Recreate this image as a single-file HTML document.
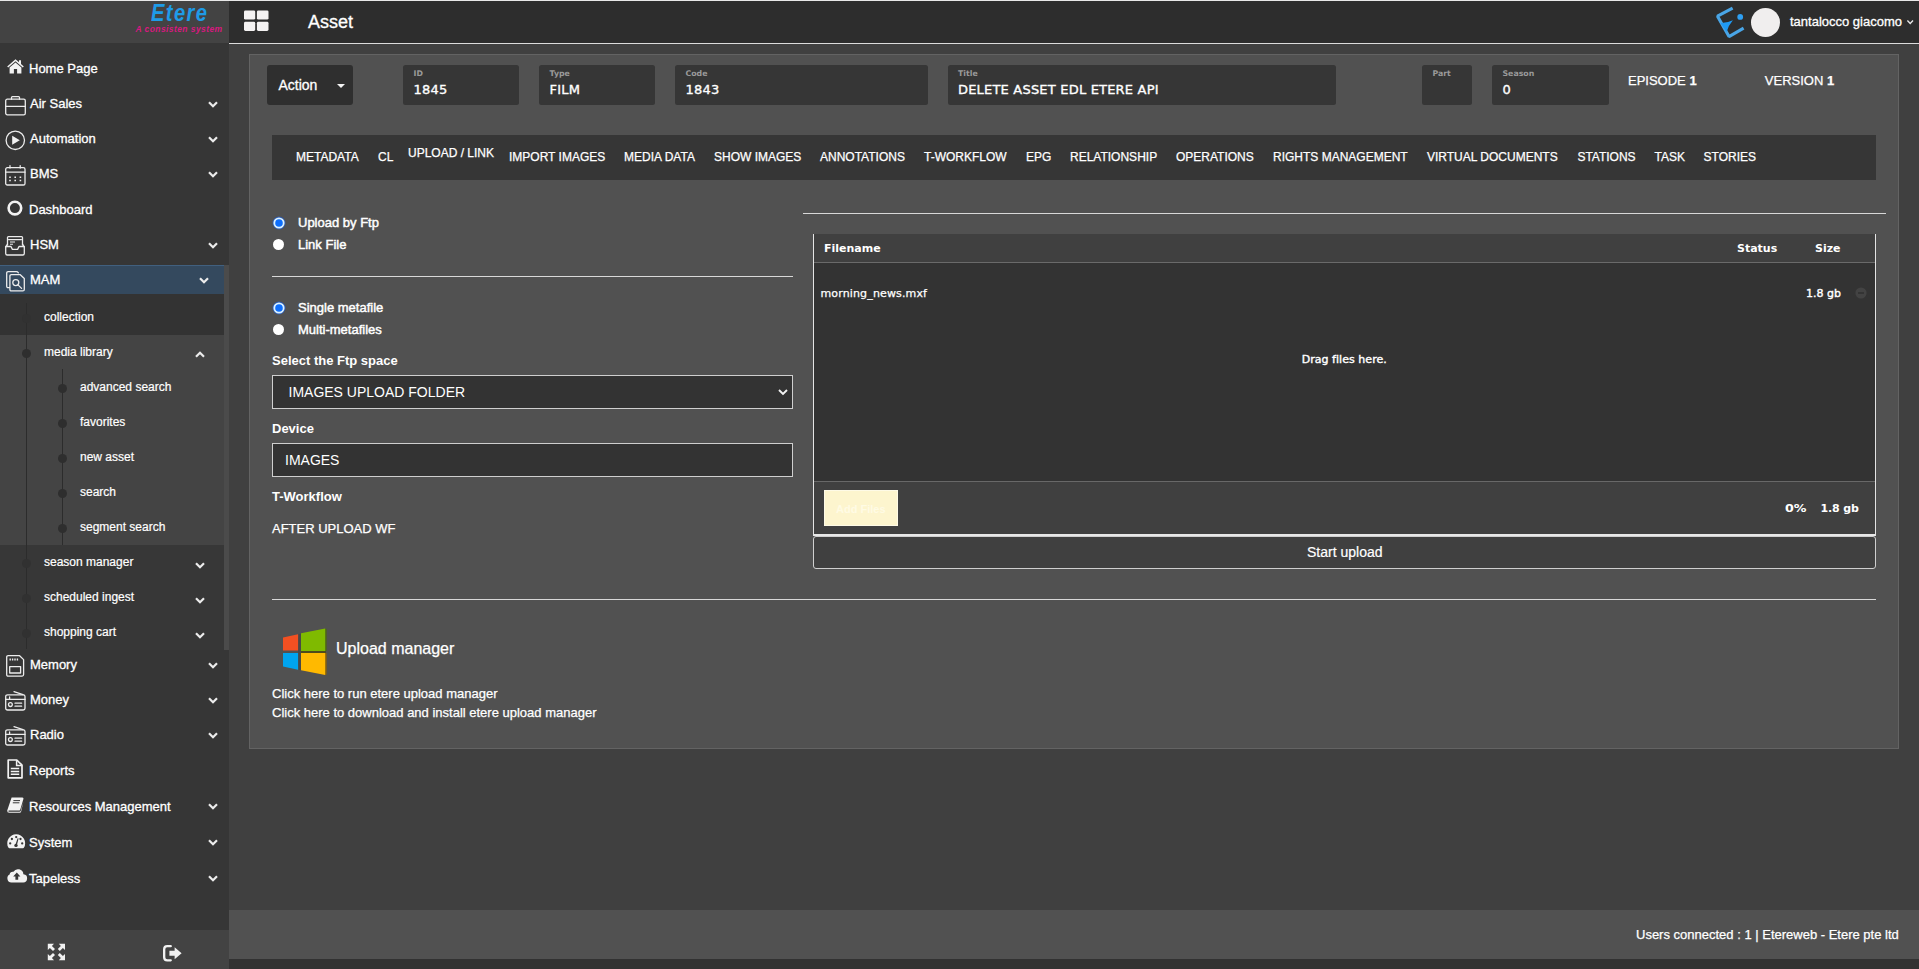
<!DOCTYPE html>
<html lang="en">
<head>
<meta charset="utf-8">
<title>Asset</title>
<style>
*{box-sizing:border-box;margin:0;padding:0}
html,body{width:1919px;height:969px;overflow:hidden;background:#404040}
body{font-family:"Liberation Sans",Arial,sans-serif;font-size:13px;color:#fff;position:relative}
.abs{position:absolute}
svg{display:block;overflow:visible}
#topline{left:0;top:0;width:1919px;height:1px;background:#e8e8e8;z-index:20}
/* sidebar */
#side{left:0;top:0;width:229px;height:969px;background:#363636}
#logo{left:0;top:0;width:229px;height:43px;background:#434343}
#sidebottom{left:0;top:929.6px;width:229px;height:40px;background:#434343}
.mi{position:absolute;left:0;width:229px;height:20px;line-height:20px;font-size:13px;color:#fff;white-space:nowrap;-webkit-text-stroke:0.3px #fff}
.mi span{position:absolute;left:30px;top:0.8px}
.mi.fa span{left:29px}
.ico{position:absolute;left:0;top:0}
.sub{position:absolute;font-size:12px;line-height:16px;height:16px;color:#fff;white-space:nowrap;-webkit-text-stroke:0.2px #fff}
.chev{position:absolute;width:10px;height:7px}
.dot{position:absolute;width:9px;height:9px;border-radius:50%;background:#2e2e2e}
#lg1{left:150.6px;top:0.7px;font-size:23px;line-height:24px;font-weight:bold;font-style:italic;color:#1e9be8;letter-spacing:1.6px;transform-origin:0 0;transform:scaleX(0.875)}
#lg2{left:135.5px;top:23.8px;font-size:8.5px;line-height:11px;font-weight:bold;font-style:italic;color:#d8187f;letter-spacing:0.42px;white-space:nowrap}
/* header */
#header{left:229px;top:0;width:1690px;height:43px;background:#2d2d2d}
#hline{left:229px;top:43px;width:1690px;height:1px;background:#dcdcdc}
#ttl{left:308px;top:11px;font-size:18px;line-height:22px;color:#fff;-webkit-text-stroke:0.3px #fff}
#uname{left:1790px;top:12px;font-size:13px;line-height:20px;white-space:nowrap;-webkit-text-stroke:0.3px #fff}
/* main */
#panel{left:249px;top:54px;width:1650px;height:695px;background:#515151;border:1px solid #636363}
#footer{left:229px;top:910px;width:1690px;height:49px;background:#515151}
#footbot{left:229px;top:959px;width:1690px;height:10px;background:#323232}
#actbtn{left:267px;top:65px;width:86px;height:40px;background:#2f2f2f;border-radius:3px}
#acttxt{position:absolute;left:11.5px;top:10.2px;font-size:14px;line-height:20px;-webkit-text-stroke:0.3px #fff}
#actbtn i{position:absolute;left:70px;top:19px;width:0;height:0;border-left:4px solid transparent;border-right:4px solid transparent;border-top:4.5px solid #f4f4f4}
.fld{top:65px;height:40px;background:#363636;border-radius:2.5px;font-family:"DejaVu Sans",Verdana,sans-serif}
.fl{position:absolute;left:10.5px;top:3.5px;font-size:7.8px;line-height:10px;color:#9a9a9a;white-space:nowrap;transform-origin:0 50%}
.fv{position:absolute;left:10.5px;top:16.5px;font-size:13px;line-height:16px;color:#fff;white-space:nowrap;font-weight:normal;letter-spacing:0.2px;-webkit-text-stroke:0.35px #fff}
.ev{top:71.3px;font-size:13px;line-height:20px;white-space:nowrap;-webkit-text-stroke:0.25px #fff}
#tabs{left:272px;top:135px;width:1604px;height:45px;background:#363636}
.tb{position:absolute;top:14.2px;font-size:12px;line-height:16px;white-space:nowrap;color:#fff;-webkit-text-stroke:0.25px #fff}
.tb.act{top:10px}
.rad{width:11.5px;height:11.5px;border-radius:50%;background:#fff}
.rad.on{border:1.6px solid #d4efff;background:#0d6efd;box-shadow:0 0 0 0.6px rgba(30,80,200,0.55)}
.rl{font-size:13px;line-height:20px;white-space:nowrap;-webkit-text-stroke:0.45px #fff}
.hr{height:1px;background:#d8d8d8}
.lb{font-size:13px;line-height:20px;font-weight:bold;white-space:nowrap}
.inp{width:521px;background:#333;border:1px solid #cfcfcf}
.inp span{position:absolute;font-size:14px;line-height:20px;white-space:nowrap;color:#fff}
.pl{font-size:13px;line-height:20px;white-space:nowrap;-webkit-text-stroke:0.25px #fff}
#upbox{left:813px;top:234px;width:1063px;height:302px;border-left:1px solid #e4e4e4;border-right:1px solid #e4e4e4;border-bottom:2px solid #e8e8e8;font-family:"DejaVu Sans",Verdana,sans-serif;font-size:11px}
#uphead{left:0;top:0;width:1061px;height:29px;background:#404040;border-bottom:1px solid #6a6a6a}
#uphead b,#upfoot b{position:absolute;font-size:11px;line-height:14px;white-space:nowrap;color:#fff}
#uphead b{top:7.7px}
#upbody{left:0;top:29px;width:1061px;height:218px;background:#333}
.vt{font-size:11px;line-height:14px;white-space:nowrap;color:#fff;-webkit-text-stroke:0.25px #fff}
#upfoot{left:0;top:247px;width:1061px;height:53px;background:#404040;border-top:1px solid #686868}
#upfoot b{top:19.7px}
#addbtn{left:10px;top:8px;width:74px;height:36px;background:#fdf5ce;border:1px solid #fefae6}
#addtxt{position:absolute;left:11px;top:9.5px;font-family:"Liberation Sans",Arial,sans-serif;font-size:11px;line-height:16px;font-weight:bold;color:#fffbe4;white-space:nowrap}
#startbtn{left:813px;top:536px;width:1063px;height:33px;background:#404040;border:1px solid #cfcfcf;border-radius:3px}
#starttxt{position:absolute;left:493px;top:6px;font-size:14px;line-height:18px;white-space:nowrap;-webkit-text-stroke:0.2px #fff}
#foottxt{position:absolute;left:1407px;top:15px;font-size:13px;line-height:20px;white-space:nowrap;-webkit-text-stroke:0.25px #fff}
</style>
</head>
<body>
<div id="side" class="abs"></div>
<div id="logo" class="abs"><div class="abs" id="lg1">Etere</div><div class="abs" id="lg2">A consisten system</div></div>
<div class="abs" style="left:224px;top:265px;width:5px;height:385px;background:#4b4b4b"></div>
<div class="abs" style="left:0;top:265px;width:224px;height:29px;background:#34495e;border-top:1px solid #41607f"></div>
<div class="abs" style="left:0;top:294px;width:224px;height:41px;background:#333"></div>
<div class="abs" style="left:0;top:334.7px;width:224px;height:210.5px;background:#444"></div>
<div class="abs" style="left:0;top:545.2px;width:224px;height:104.8px;background:#373737"></div>
<div class="abs" style="left:26px;top:303px;width:1px;height:346px;background:#2c2c2c"></div>
<div class="abs" style="left:62px;top:369px;width:1px;height:176px;background:#2c2c2c"></div>
<div class="mi fa" style="top:58px"><svg class="ico" style="left:7px;top:1.1px" width="17" height="15" viewBox="0 0 17 15"><path d="M8.5 0.3 L0.2 7.4 L1.2 8.5 L8.5 2.3 L15.8 8.5 L16.8 7.4 L14 5 V1.2 H12 V3.3 Z" fill="#f2f2f2"/><path d="M8.5 3.6 L2.6 8.6 V14.5 H6.9 V10 H10.1 V14.5 H14.4 V8.6 Z" fill="#f2f2f2"/></svg><span>Home Page</span></div>
<div class="mi" style="top:93px"><svg class="ico" style="left:5px;top:2.5px" width="21" height="20" viewBox="0 0 21 20"><path d="M6.5 3.2 V1.6 Q6.5 0.7 7.4 0.7 H13.6 Q14.5 0.7 14.5 1.6 V3.2" stroke="#ececec" stroke-width="1.3" fill="none" stroke-linejoin="round" stroke-linecap="round"/><rect x="0.7" y="3.2" width="19.6" height="15.6" rx="1.6" stroke="#ececec" stroke-width="1.3" fill="none" stroke-linejoin="round" stroke-linecap="round"/><path d="M0.7 10.3 H20.3" stroke="#ececec" stroke-width="1.3" fill="none" stroke-linejoin="round" stroke-linecap="round"/></svg><span>Air Sales</span></div>
<svg class="chev" style="left:208px;top:101.4px" viewBox="0 0 10 7"><path d="M1 1.2 L5 5.2 L9 1.2" fill="none" stroke="#ececec" stroke-width="2.2"/></svg>
<div class="mi" style="top:128px"><svg class="ico" style="left:5px;top:1.5px" width="21" height="21" viewBox="0 0 21 21"><circle cx="10.3" cy="10.3" r="9.2" stroke="#ececec" stroke-width="1.3" fill="none" stroke-linejoin="round" stroke-linecap="round"/><path d="M7.2 5.8 L14.8 10.3 L7.2 14.8 Z" fill="#f2f2f2"/></svg><span>Automation</span></div>
<svg class="chev" style="left:208px;top:136.4px" viewBox="0 0 10 7"><path d="M1 1.2 L5 5.2 L9 1.2" fill="none" stroke="#ececec" stroke-width="2.2"/></svg>
<div class="mi" style="top:163px"><svg class="ico" style="left:5px;top:1.8px" width="21" height="21" viewBox="0 0 21 21"><rect x="0.7" y="2.7" width="19.3" height="17.3" rx="1.6" stroke="#ececec" stroke-width="1.3" fill="none" stroke-linejoin="round" stroke-linecap="round"/><path d="M0.7 7.2 H20 M5 0.6 V3 M15.2 0.6 V3" stroke="#ececec" stroke-width="1.3" fill="none" stroke-linejoin="round" stroke-linecap="round"/><path d="M4.2 12.2 h1.6 M9.4 12.2 h1.6 M14.6 12.2 h1.6 M4.2 15.6 h1.6 M9.4 15.6 h1.6 M14.6 15.6 h1.6" stroke="#ececec" stroke-width="1.5" fill="none"/></svg><span>BMS</span></div>
<svg class="chev" style="left:208px;top:171.4px" viewBox="0 0 10 7"><path d="M1 1.2 L5 5.2 L9 1.2" fill="none" stroke="#ececec" stroke-width="2.2"/></svg>
<div class="mi fa" style="top:199px"><svg class="ico" style="left:7px;top:2.2px" width="16" height="16" viewBox="0 0 16 16"><circle cx="7.9" cy="7.1" r="6.3" fill="none" stroke="#f2f2f2" stroke-width="2.6"/></svg><span>Dashboard</span></div>
<div class="mi" style="top:234px"><svg class="ico" style="left:5px;top:2px" width="21" height="20" viewBox="0 0 21 20"><path d="M2.5 9 V1.6 Q2.5 0.7 3.4 0.7 H16.6 Q17.5 0.7 17.5 1.6 V9" stroke="#ececec" stroke-width="1.3" fill="none" stroke-linejoin="round" stroke-linecap="round"/><path d="M3.6 3.6 H16.4" stroke="#ececec" stroke-width="1.3" fill="none" stroke-linejoin="round" stroke-linecap="round"/><path d="M5 6 h5 M5 8.2 h3" stroke="#ececec" stroke-width="1.1" fill="none"/><path d="M0.7 11 L2.5 8 M19.3 11 L17.5 8" stroke="#ececec" stroke-width="1.3" fill="none" stroke-linejoin="round" stroke-linecap="round"/><path d="M0.7 10.5 H6 L7.4 13.4 H12.6 L14 10.5 H19.3 V17.6 Q19.3 19 17.9 19 H2.1 Q0.7 19 0.7 17.6 Z" stroke="#ececec" stroke-width="1.3" fill="none" stroke-linejoin="round" stroke-linecap="round"/></svg><span>HSM</span></div>
<svg class="chev" style="left:208px;top:242.4px" viewBox="0 0 10 7"><path d="M1 1.2 L5 5.2 L9 1.2" fill="none" stroke="#ececec" stroke-width="2.2"/></svg>
<div class="mi" style="top:269px"><svg class="ico" style="left:6px;top:1.9px" width="20" height="21" viewBox="0 0 20 21"><path d="M3.6 16.6 H2.2 Q0.7 16.6 0.7 15.1 V2.2 Q0.7 0.7 2.2 0.7 H10.4 Q11.6 0.7 12.4 1.8" stroke="#ececec" stroke-width="1.3" fill="none" stroke-linejoin="round" stroke-linecap="round"/><path d="M5.4 3.6 H14 L18.3 7.6 V18.4 Q18.3 19.9 16.8 19.9 H5.4 Q3.9 19.9 3.9 18.4 V5.1 Q3.9 3.6 5.4 3.6 Z" stroke="#ececec" stroke-width="1.3" fill="none" stroke-linejoin="round" stroke-linecap="round"/><circle cx="9.8" cy="11.6" r="3" stroke="#ececec" stroke-width="1.3" fill="none" stroke-linejoin="round" stroke-linecap="round"/><path d="M12 13.9 L15.6 17.4" stroke="#ececec" stroke-width="1.3" fill="none" stroke-linejoin="round" stroke-linecap="round"/></svg><span>MAM</span></div>
<svg class="chev" style="left:198.9px;top:277px" viewBox="0 0 10 7"><path d="M1 1.2 L5 5.2 L9 1.2" fill="none" stroke="#ececec" stroke-width="2.2"/></svg>
<div class="mi" style="top:654px"><svg class="ico" style="left:6px;top:1px" width="19" height="22" viewBox="0 0 19 22"><path d="M2.2 0.7 H13.6 L17.6 4.6 V19.6 Q17.6 21.1 16.1 21.1 H2.2 Q0.7 21.1 0.7 19.6 V2.2 Q0.7 0.7 2.2 0.7 Z" stroke="#ececec" stroke-width="1.3" fill="none" stroke-linejoin="round" stroke-linecap="round"/><rect x="3.7" y="11.6" width="10.9" height="6.4" stroke="#ececec" stroke-width="1.3" fill="none" stroke-linejoin="round" stroke-linecap="round"/><path d="M4.2 3.4 v2.2 M6.6 3.4 v2.2 M9 3.4 v2.2 M11.4 3.4 v2.2" stroke="#ececec" stroke-width="1.4" fill="none"/></svg><span>Memory</span></div>
<svg class="chev" style="left:208px;top:662.4px" viewBox="0 0 10 7"><path d="M1 1.2 L5 5.2 L9 1.2" fill="none" stroke="#ececec" stroke-width="2.2"/></svg>
<div class="mi" style="top:689px"><svg class="ico" style="left:5px;top:1.8px" width="21" height="20" viewBox="0 0 21 20"><path d="M9 0.6 L18 3.6" stroke="#ececec" stroke-width="1.3" fill="none" stroke-linejoin="round" stroke-linecap="round"/><rect x="0.7" y="3.8" width="19.3" height="15.2" rx="1.8" stroke="#ececec" stroke-width="1.3" fill="none" stroke-linejoin="round" stroke-linecap="round"/><path d="M0.7 8.4 H20" stroke="#ececec" stroke-width="1.3" fill="none" stroke-linejoin="round" stroke-linecap="round"/><path d="M4.6 6 v2" stroke="#ececec" stroke-width="1.3" fill="none" stroke-linejoin="round" stroke-linecap="round"/><circle cx="5.4" cy="13.6" r="1.9" stroke="#ececec" stroke-width="1.3" fill="none" stroke-linejoin="round" stroke-linecap="round"/><path d="M10 12.2 h6.6 M10 15.2 h6.6" stroke="#ececec" stroke-width="1.3" fill="none" stroke-linejoin="round" stroke-linecap="round"/></svg><span>Money</span></div>
<svg class="chev" style="left:208px;top:697.4px" viewBox="0 0 10 7"><path d="M1 1.2 L5 5.2 L9 1.2" fill="none" stroke="#ececec" stroke-width="2.2"/></svg>
<div class="mi" style="top:724px"><svg class="ico" style="left:5px;top:1.8px" width="21" height="20" viewBox="0 0 21 20"><path d="M9 0.6 L18 3.6" stroke="#ececec" stroke-width="1.3" fill="none" stroke-linejoin="round" stroke-linecap="round"/><rect x="0.7" y="3.8" width="19.3" height="15.2" rx="1.8" stroke="#ececec" stroke-width="1.3" fill="none" stroke-linejoin="round" stroke-linecap="round"/><path d="M0.7 8.4 H20" stroke="#ececec" stroke-width="1.3" fill="none" stroke-linejoin="round" stroke-linecap="round"/><path d="M4.6 6 v2" stroke="#ececec" stroke-width="1.3" fill="none" stroke-linejoin="round" stroke-linecap="round"/><circle cx="5.4" cy="13.6" r="1.9" stroke="#ececec" stroke-width="1.3" fill="none" stroke-linejoin="round" stroke-linecap="round"/><path d="M10 12.2 h6.6 M10 15.2 h6.6" stroke="#ececec" stroke-width="1.3" fill="none" stroke-linejoin="round" stroke-linecap="round"/></svg><span>Radio</span></div>
<svg class="chev" style="left:208px;top:732.4px" viewBox="0 0 10 7"><path d="M1 1.2 L5 5.2 L9 1.2" fill="none" stroke="#ececec" stroke-width="2.2"/></svg>
<div class="mi fa" style="top:760px"><svg class="ico" style="left:7px;top:-1px" width="16" height="20" viewBox="0 0 16 20"><path d="M1.2 1 H9.8 L15 6.2 V18.8 H1.2 Z" fill="none" stroke="#f2f2f2" stroke-width="1.7" stroke-linejoin="round"/><path d="M9.6 1.2 V6.4 H14.8" fill="none" stroke="#f2f2f2" stroke-width="1.5"/><path d="M3.8 9.6 h8.4 M3.8 12.4 h8.4 M3.8 15.2 h8.4" stroke="#f2f2f2" stroke-width="1.5"/></svg><span>Reports</span></div>
<div class="mi fa" style="top:796px"><svg class="ico" style="left:7px;top:0.5px" width="17" height="16" viewBox="0 0 17 16"><path d="M4.6 0.4 H15.4 Q16.9 0.4 16.4 1.9 L13.3 12.4 Q12.9 13.6 11.6 13.6 H2 Q1.2 13.6 1.4 14.2 Q1.6 14.8 2.6 14.8 H12.6 Q13.4 14.8 13.7 14 L16.5 4.6 L14 15 Q13.7 15.8 12.8 15.8 H2.2 Q0 15.8 0.2 13.4 Z" fill="#f2f2f2"/><path d="M6.4 3.6 h6.6 M5.8 5.8 h6.6" stroke="#363636" stroke-width="1" fill="none"/></svg><span>Resources Management</span></div>
<svg class="chev" style="left:208px;top:803.2px" viewBox="0 0 10 7"><path d="M1 1.2 L5 5.2 L9 1.2" fill="none" stroke="#ececec" stroke-width="2.2"/></svg>
<div class="mi fa" style="top:832px"><svg class="ico" style="left:7px;top:2px" width="19" height="15" viewBox="0 0 19 15"><path d="M9.2 0.2 A9 9 0 0 0 1.4 13.6 Q1.7 14.2 2.4 14.2 H16 Q16.7 14.2 17 13.6 A9 9 0 0 0 9.2 0.2 Z" fill="#f2f2f2"/><g fill="#363636"><circle cx="3.2" cy="9.4" r="1.15"/><circle cx="4.9" cy="5" r="1.15"/><circle cx="9.2" cy="3.1" r="1.15"/><circle cx="13.5" cy="5" r="1.15"/><circle cx="15.2" cy="9.4" r="1.15"/><circle cx="9" cy="11.4" r="1.7"/><path d="M8.5 10.6 L10.6 4.2 L11.6 4.5 L9.9 11 Z"/></g></svg><span>System</span></div>
<svg class="chev" style="left:208px;top:839.2px" viewBox="0 0 10 7"><path d="M1 1.2 L5 5.2 L9 1.2" fill="none" stroke="#ececec" stroke-width="2.2"/></svg>
<div class="mi fa" style="top:868px"><svg class="ico" style="left:7px;top:0.2px" width="20" height="15" viewBox="0 0 20 15"><path d="M4.4 14.4 A4.2 4.2 0 0 1 2.6 6.5 A3 3 0 0 1 6.4 3.8 A5.4 5.4 0 0 1 16.4 6.2 A4.1 4.1 0 0 1 15.6 14.4 Z" fill="#f2f2f2"/><path d="M9.8 4.6 L13.4 8.6 H11.2 V11.8 H8.4 V8.6 H6.2 Z" fill="#363636"/></svg><span>Tapeless</span></div>
<svg class="chev" style="left:208px;top:875.2px" viewBox="0 0 10 7"><path d="M1 1.2 L5 5.2 L9 1.2" fill="none" stroke="#ececec" stroke-width="2.2"/></svg>
<div class="sub" style="left:44px;top:308.8px">collection</div>
<div class="dot" style="left:22.0px;top:314.0px;background:#313131"></div>
<div class="sub" style="left:44px;top:343.8px">media library</div>
<div class="dot" style="left:22.0px;top:349.0px;background:#2e2e2e"></div>
<svg class="chev" style="left:195.3px;top:351.0px" viewBox="0 0 10 7"><path d="M1 5.8 L5 1.8 L9 5.8" fill="none" stroke="#ececec" stroke-width="2.2"/></svg>
<div class="sub" style="left:80px;top:378.8px">advanced search</div>
<div class="dot" style="left:58.0px;top:384.0px;background:#2e2e2e"></div>
<div class="sub" style="left:80px;top:413.8px">favorites</div>
<div class="dot" style="left:58.0px;top:419.0px;background:#2e2e2e"></div>
<div class="sub" style="left:80px;top:448.8px">new asset</div>
<div class="dot" style="left:58.0px;top:454.0px;background:#2e2e2e"></div>
<div class="sub" style="left:80px;top:483.8px">search</div>
<div class="dot" style="left:58.0px;top:489.0px;background:#2e2e2e"></div>
<div class="sub" style="left:80px;top:518.8px">segment search</div>
<div class="dot" style="left:58.0px;top:524.0px;background:#2e2e2e"></div>
<div class="sub" style="left:44px;top:553.8px">season manager</div>
<div class="dot" style="left:22.0px;top:559.0px;background:#313131"></div>
<svg class="chev" style="left:195.3px;top:561.9px" viewBox="0 0 10 7"><path d="M1 1.2 L5 5.2 L9 1.2" fill="none" stroke="#ececec" stroke-width="2.2"/></svg>
<div class="sub" style="left:44px;top:588.8px">scheduled ingest</div>
<div class="dot" style="left:22.0px;top:594.0px;background:#313131"></div>
<svg class="chev" style="left:195.3px;top:596.9px" viewBox="0 0 10 7"><path d="M1 1.2 L5 5.2 L9 1.2" fill="none" stroke="#ececec" stroke-width="2.2"/></svg>
<div class="sub" style="left:44px;top:623.8px">shopping cart</div>
<div class="dot" style="left:22.0px;top:629.0px;background:#313131"></div>
<svg class="chev" style="left:195.3px;top:631.9px" viewBox="0 0 10 7"><path d="M1 1.2 L5 5.2 L9 1.2" fill="none" stroke="#ececec" stroke-width="2.2"/></svg>
<div id="sidebottom" class="abs"></div>
<svg class="abs" style="left:47px;top:943px" width="19" height="18" viewBox="0 0 19 18"><g fill="#f2f2f2"><path d="M0.8 0.8 H7 L4.9 2.9 L8 6 L6 8 L2.9 4.9 L0.8 7 Z"/><path d="M18 0.8 V7 L15.9 4.9 L12.8 8 L10.8 6 L13.9 2.9 L11.8 0.8 Z"/><path d="M0.8 17.2 V11 L2.9 13.1 L6 10 L8 12 L4.9 15.1 L7 17.2 Z"/><path d="M18 17.2 H11.8 L13.9 15.1 L10.8 12 L12.8 10 L15.9 13.1 L18 11 Z"/></g></svg>
<svg class="abs" style="left:162.8px;top:944.8px" width="19.4" height="16.5" viewBox="0 0 20 17"><path d="M8 1.2 H4.4 Q1.2 1.2 1.2 4.4 V12.6 Q1.2 15.8 4.4 15.8 H8" fill="none" stroke="#f2f2f2" stroke-width="2.4" stroke-linecap="round"/><path d="M6.6 6 H12 V2.2 L19.2 8.5 L12 14.8 V11 H6.6 Z" fill="#f2f2f2"/></svg>
<div id="header" class="abs"></div>
<div id="hline" class="abs"></div>
<svg class="abs" style="left:244px;top:10px" width="25" height="21" viewBox="0 0 25 21"><g fill="#f4f2f2"><rect x="0" y="0.4" width="11.2" height="9.2" rx="1.4"/><rect x="12.9" y="0.4" width="11.6" height="9.2" rx="1.4"/><rect x="0" y="11.8" width="11.2" height="9.1" rx="1.4"/><rect x="12.9" y="11.8" width="11.6" height="9.1" rx="1.4"/></g></svg>
<div id="ttl" class="abs">Asset</div>
<svg class="abs" style="left:1715px;top:6px" width="31" height="33" viewBox="0 0 31 33"><path d="M17.6 2.2 L2.5 10.2 L14 30.6 L28.6 22.2" fill="none" stroke="#49a5e6" stroke-width="3.1" stroke-linejoin="bevel"/><path d="M5.4 17 Q11 17.4 17.9 14.2 Q13.6 19 11.6 26 Z" fill="#1f9af4"/><circle cx="25.2" cy="10.9" r="2.9" fill="#2e9ff2"/></svg>
<div class="abs" style="left:1751px;top:8px;width:29px;height:29px;border-radius:50%;background:#f0eeee"></div>
<div id="uname" class="abs">tantalocco giacomo</div>
<svg class="abs" style="left:1907px;top:19.6px" width="7" height="5" viewBox="0 0 7 5"><path d="M0.4 0.6 L3.2 3.4 L6 0.6" fill="none" stroke="#e8e8e8" stroke-width="1.4"/></svg>
<div id="panel" class="abs"></div>
<div class="abs" id="actbtn"><span id="acttxt">Action</span><i></i></div>
<div class="abs fld" style="left:403px;width:116px"><b class="fl" id="l_id">ID</b><b class="fv" id="v_id">1845</b></div>
<div class="abs fld" style="left:539px;width:116px"><b class="fl" id="l_type">Type</b><b class="fv" id="v_type">FILM</b></div>
<div class="abs fld" style="left:675px;width:253px"><b class="fl" id="l_code">Code</b><b class="fv" id="v_code">1843</b></div>
<div class="abs fld" style="left:948px;width:388px"><b class="fl" id="l_title" style="left:10px">Title</b><b class="fv" id="v_title" style="left:10px">DELETE ASSET EDL ETERE API</b></div>
<div class="abs fld" style="left:1422px;width:50px"><b class="fl" id="l_part">Part</b></div>
<div class="abs fld" style="left:1492px;width:117px"><b class="fl" id="l_season">Season</b><b class="fv" id="v_season">0</b></div>
<div class="abs ev" id="ep" style="left:1628px">EPISODE <b>1</b></div>
<div class="abs ev" id="ver" style="left:1764.8px">VERSION <b>1</b></div>
<div class="abs" id="tabs">
<span class="tb" id="t1" style="left:24px">METADATA</span>
<span class="tb" id="t2" style="left:106px">CL</span>
<span class="tb act" id="t3" style="left:136px">UPLOAD / LINK</span>
<span class="tb" id="t4" style="left:237px">IMPORT IMAGES</span>
<span class="tb" id="t5" style="left:352px">MEDIA DATA</span>
<span class="tb" id="t6" style="left:442px">SHOW IMAGES</span>
<span class="tb" id="t7" style="left:548px">ANNOTATIONS</span>
<span class="tb" id="t8" style="left:652px">T-WORKFLOW</span>
<span class="tb" id="t9" style="left:754px">EPG</span>
<span class="tb" id="t10" style="left:798px">RELATIONSHIP</span>
<span class="tb" id="t11" style="left:904px">OPERATIONS</span>
<span class="tb" id="t12" style="left:1001px">RIGHTS MANAGEMENT</span>
<span class="tb" id="t13" style="left:1155px">VIRTUAL DOCUMENTS</span>
<span class="tb" id="t14" style="left:1305.4px">STATIONS</span>
<span class="tb" id="t15" style="left:1382.5px">TASK</span>
<span class="tb" id="t16" style="left:1431.6px">STORIES</span>
</div>
<svg class="abs" style="left:271.85px;top:215.5px" width="14" height="14" viewBox="0 0 14 14"><circle cx="7" cy="7" r="6.5" fill="#1f60d6" opacity="0.7"/><circle cx="7" cy="7" r="5.6" fill="#dcf2ff"/><circle cx="7" cy="7" r="3.8" fill="#0d6efd"/></svg><div class="abs rl" id="r1" style="left:298px;top:212.8px">Upload by Ftp</div>
<div class="abs rad" style="left:272.6px;top:238.6px"></div><div class="abs rl" id="r2" style="left:298px;top:234.8px">Link File</div>
<div class="abs hr" style="left:272px;top:276px;width:521px"></div>
<svg class="abs" style="left:271.85px;top:300.7px" width="14" height="14" viewBox="0 0 14 14"><circle cx="7" cy="7" r="6.5" fill="#1f60d6" opacity="0.7"/><circle cx="7" cy="7" r="5.6" fill="#dcf2ff"/><circle cx="7" cy="7" r="3.8" fill="#0d6efd"/></svg><div class="abs rl" id="r3" style="left:298px;top:297.8px">Single metafile</div>
<div class="abs rad" style="left:272.6px;top:323.6px"></div><div class="abs rl" id="r4" style="left:298px;top:319.8px">Multi-metafiles</div>
<div class="abs lb" id="lb1" style="left:272px;top:350.8px">Select the Ftp space</div>
<div class="abs inp" style="left:272px;top:375px;height:34px"><span id="sel" style="left:15.5px;top:5.7px">IMAGES UPLOAD FOLDER</span><svg class="abs" style="left:505px;top:13px" width="10" height="7" viewBox="0 0 10 7"><path d="M1 1 L5 5 L9 1" fill="none" stroke="#f2f2f2" stroke-width="1.9"/></svg></div>
<div class="abs lb" id="lb2" style="left:272px;top:418.8px">Device</div>
<div class="abs inp" style="left:272px;top:443px;height:34px"><span id="dev" style="left:12px;top:5.5px">IMAGES</span></div>
<div class="abs lb" id="lb3" style="left:272px;top:486.8px">T-Workflow</div>
<div class="abs pl" id="wf" style="left:272px;top:518.6px">AFTER UPLOAD WF</div>
<div class="abs hr" style="left:272px;top:599px;width:1604px"></div>
<svg class="abs" style="left:281px;top:628px" width="46" height="48" viewBox="0 0 46 48"><path d="M19.4 22.6 H45 V25.4 H19.4 Z" fill="#4e4a1c"/><path d="M17.1 6.3 L20 5.6 V42.2 L17.1 41.7 Z" fill="#484848"/><path d="M44.2 0.5 L45.6 1 V23 H44.2 Z" fill="#4d6b0c"/><path d="M44.2 25 H45.6 V46.4 L44.2 46.9 Z" fill="#8f6300"/><path d="M2 9.4 L17.1 6.3 V22.6 H2 Z" fill="#f25022"/><path d="M20 5.2 L44.2 0.5 V23 H20 Z" fill="#7fba00"/><path d="M2 25 H17.1 V41.7 L2 38.6 Z" fill="#00a4ef"/><path d="M20 25 H44.2 V46.9 L20 42.2 Z" fill="#ffb900"/></svg>
<div class="abs pl" id="um" style="left:336px;top:638px;font-size:16px;line-height:22px">Upload manager</div>
<div class="abs pl" id="c1" style="left:272px;top:683.7px">Click here to run etere upload manager</div>
<div class="abs pl" id="c2" style="left:272px;top:702.7px">Click here to download and install etere upload manager</div>
<div class="abs hr" style="left:803px;top:213px;width:1083px"></div>
<div class="abs" id="upbox">
<div class="abs" id="uphead"><b id="h_fn" style="left:10px">Filename</b><b id="h_st" style="left:923px">Status</b><b id="h_sz" style="left:1001px">Size</b></div>
<div class="abs" id="upbody">
<span class="abs vt" id="f_name" style="left:6.5px;top:23.5px;letter-spacing:0.14px">morning_news.mxf</span>
<span class="abs vt" id="f_size" style="left:992px;top:23.5px;-webkit-text-stroke:0.4px #fff">1.8 gb</span>
<svg class="abs" style="left:1041px;top:24px" width="12" height="12" viewBox="0 0 12 12"><circle cx="6" cy="6" r="5.6" fill="#434343"/><path d="M3 6 H9" stroke="#333" stroke-width="1.8"/></svg>
<span class="abs vt" id="drag" style="left:487.7px;top:89.7px;-webkit-text-stroke:0.4px #fff;letter-spacing:0.04px">Drag files here.</span>
</div>
<div class="abs" id="upfoot"><div class="abs" id="addbtn"><span id="addtxt">Add Files</span></div><b id="f_pc" style="left:971px;transform-origin:0 50%;transform:scaleX(1.15)">0%</b><b id="f_tot" style="left:1006.5px;letter-spacing:-0.15px">1.8 gb</b></div>
</div>
<div class="abs" id="startbtn"><span id="starttxt">Start upload</span></div>
<div id="footer" class="abs"><span id="foottxt">Users connected : 1 | Etereweb - Etere pte ltd</span></div>
<div id="footbot" class="abs"></div>
<div id="topline" class="abs"></div>
</body>
</html>
